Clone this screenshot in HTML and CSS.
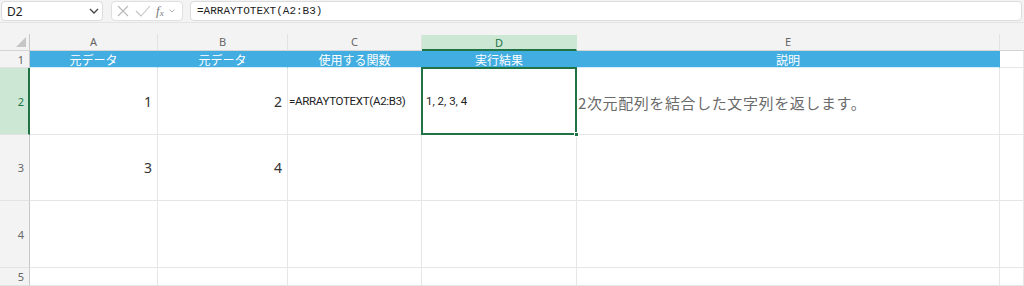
FILE: index.html
```html
<!DOCTYPE html>
<html lang="ja">
<head>
    <meta charset="UTF-8">
    <title>ARRAYTOTEXT</title>
    <link rel="stylesheet" href="styles.css">
</head>
<body>
    <div class="toolbar">
        <div class="name-box">
            <span>D2</span>
            <svg class="chev" width="10" height="6" viewBox="0 0 10 6"><path d="M1 1l4 4 4-4" fill="none" stroke="#444" stroke-width="1.3"/></svg>
        </div>
        <div class="func-box">
            <svg width="14" height="14" viewBox="0 0 14 14"><path d="M2 2l10 10M12 2L2 12" stroke="#b8b8b8" stroke-width="1.1"/></svg>
            <svg width="16" height="14" viewBox="0 0 16 14"><path d="M1 7l5 5L15 2" fill="none" stroke="#c4c4c4" stroke-width="1.1"/></svg>
            <span class="fx">f<sub>x</sub></span>
            <svg width="6" height="4" viewBox="0 0 6 4"><path d="M0.5 0.5l2.5 2.5 2.5-2.5" fill="none" stroke="#aaa" stroke-width="0.9"/></svg>
        </div>
        <div class="formula-box">=ARRAYTOTEXT(A2:B3)</div>
    </div>

    <div class="sheet">
        <!-- 列ヘッダー -->
        <div class="corner">
            <svg width="10" height="10" viewBox="0 0 10 10"><path d="M10 0V10H0z" fill="#c6c6c6"/></svg>
        </div>
        <div class="col-head">A</div>
        <div class="col-head">B</div>
        <div class="col-head">C</div>
        <div class="col-head active">D</div>
        <div class="col-head">E</div>
        <div class="col-head last"></div>

        <!-- 1行目 -->
        <div class="row-head">1</div>
        <div class="cell title">元データ</div>
        <div class="cell title">元データ</div>
        <div class="cell title">使用する関数</div>
        <div class="cell title">実行結果</div>
        <div class="cell title">説明</div>
        <div class="cell"></div>

        <!-- 2行目 -->
        <div class="row-head active">2</div>
        <div class="cell num">1</div>
        <div class="cell num">2</div>
        <div class="cell formula">=ARRAYTOTEXT(A2:B3)</div>
        <div class="cell result selected">1, 2, 3, 4</div>
        <div class="cell note">2次元配列を結合した文字列を返します。</div>
        <div class="cell"></div>

        <!-- 3行目 -->
        <div class="row-head">3</div>
        <div class="cell num">3</div>
        <div class="cell num">4</div>
        <div class="cell"></div>
        <div class="cell"></div>
        <div class="cell"></div>
        <div class="cell"></div>

        <!-- 4行目 -->
        <div class="row-head">4</div>
        <div class="cell"></div>
        <div class="cell"></div>
        <div class="cell"></div>
        <div class="cell"></div>
        <div class="cell"></div>
        <div class="cell"></div>

        <!-- 5行目 -->
        <div class="row-head">5</div>
        <div class="cell"></div>
        <div class="cell"></div>
        <div class="cell"></div>
        <div class="cell"></div>
        <div class="cell"></div>
        <div class="cell"></div>
    </div>
</body>
</html>
```

FILE: styles.css
```css
body {
    margin: 0;
    padding: 0;
    width: 1024px;
    height: 286px;
    overflow: hidden;
    background: #f3f3f3;
    font-family: "Noto Sans", "Noto Sans CJK JP", sans-serif;
    color: #333;
}

/* 上部の数式バー */
.toolbar {
    height: 23px;
    display: flex;
    align-items: center;
    padding: 0 2px 0 1px;
    box-sizing: border-box;
    border-bottom: 1px solid #e4e4e4;
    background: #f3f3f3;
}
.name-box {
    width: 102px;
    height: 20px;
    box-sizing: border-box;
    background: #fff;
    border: 1px solid #dcdcdc;
    border-radius: 4px;
    display: flex;
    align-items: center;
    justify-content: space-between;
    padding: 0 3px 0 5px;
    font-size: 12px;
    color: #222;
}
.func-box {
    width: 72px;
    height: 20px;
    margin-left: 8px;
    box-sizing: border-box;
    background: #fff;
    border: 1px solid #e0e0e0;
    border-radius: 4px;
    display: flex;
    align-items: center;
    gap: 5px;
    padding: 0 3px 0 4px;
}
.fx {
    font-family: "Liberation Serif", serif;
    font-style: italic;
    font-size: 13px;
    color: #777;
    line-height: 1;
}
.fx sub {
    font-size: 9px;
    vertical-align: -1px;
}
.formula-box {
    flex: 1;
    height: 20px;
    margin-left: 7px;
    box-sizing: border-box;
    background: #fff;
    border: 1px solid #dcdcdc;
    border-radius: 4px;
    padding: 0 6px;
    font-family: "Liberation Mono", monospace;
    font-size: 11px;
    line-height: 18px;
    color: #222;
}

/* シート */
.sheet {
    margin-top: 11px;
    display: grid;
    grid-template-columns: 30px 128px 130px 134px 155px 423px 1fr;
    grid-template-rows: 17px 17px 67px 66px 67px 18px;
}
.corner {
    background: #f3f3f3;
    border-right: 1px solid #c8c8c8;
    border-bottom: 1px solid #d4d4d4;
    box-sizing: border-box;
    display: flex;
    align-items: flex-end;
    justify-content: flex-end;
    padding: 0 3px 3px 0;
}
.col-head {
    background: #f3f3f3;
    border-right: 1px solid #e2e2e2;
    border-bottom: 1px solid #d4d4d4;
    box-sizing: border-box;
    font-size: 11px;
    color: #666;
    text-align: center;
    line-height: 16px;
}
.col-head.active {
    background: #cce8d5;
    color: #217346;
    border-bottom: 2px solid #217346;
    border-right-color: #cce8d5;
    margin-top: 1px;
}
.col-head.last {
    border-right: none;
}
.row-head {
    background: #f3f3f3;
    border-right: 1px solid #c8c8c8;
    border-bottom: 1px solid #e2e2e2;
    box-sizing: border-box;
    font-size: 11px;
    color: #666;
    display: flex;
    align-items: center;
    justify-content: flex-end;
    padding-right: 5px;
}
.row-head.active {
    background: #cce8d5;
    color: #217346;
    border-right: 2px solid #217346;
    padding-right: 4px;
}
.cell {
    background: #fff;
    border-right: 1px solid #e6e6e6;
    border-bottom: 1px solid #e6e6e6;
    box-sizing: border-box;
    display: flex;
    align-items: center;
    white-space: nowrap;
}
.cell.title {
    background: #42ade1;
    border-right-color: #42ade1;
    border-bottom-color: #d6eef9;
    color: #fff;
    font-family: "Noto Sans CJK JP", sans-serif;
    font-size: 12px;
    justify-content: center;
}
.cell.num {
    justify-content: flex-end;
    padding-right: 5px;
    font-size: 14px;
    color: #333;
}
.cell.formula {
    padding-left: 1px;
    font-family: "Roboto", sans-serif;
    font-size: 11.5px;
    letter-spacing: -0.3px;
    color: #222;
    overflow: visible;
}
.cell.result {
    padding-left: 4px;
    font-family: "Roboto", sans-serif;
    font-size: 11.5px;
    color: #222;
}
.cell.note {
    padding-left: 1px;
    font-family: "Noto Sans CJK JP", sans-serif;
    font-size: 15px;
    letter-spacing: 0.6px;
    color: #6a6a6a;
    padding-top: 3px;
}

/* 選択中のセル */
.selected {
    position: relative;
}
.selected::before {
    content: "";
    position: absolute;
    left: -1px;
    top: -1px;
    right: -1px;
    bottom: -1px;
    border: 2px solid #217346;
}
.selected::after {
    content: "";
    position: absolute;
    right: -3px;
    bottom: -3px;
    width: 5px;
    height: 5px;
    background: #217346;
    border: 1px solid #fff;
    box-sizing: border-box;
}
```
